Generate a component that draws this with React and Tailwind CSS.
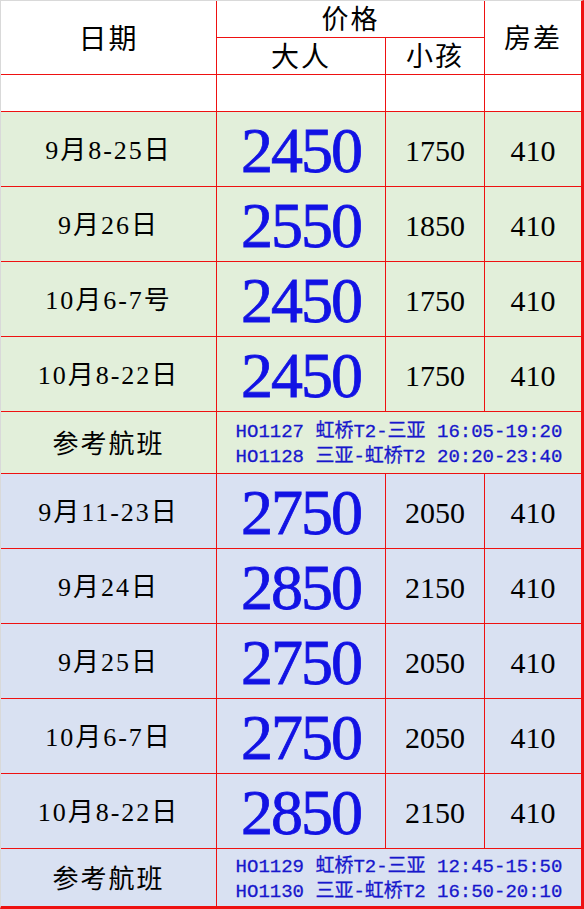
import React from "react";

const serif = { fontFamily: '"Liberation Serif", "Noto Sans CJK SC", serif' };
const mono = { fontFamily: '"Liberation Mono", "Noto Sans CJK SC", monospace' };

const green = [
  ["9月8-25日", "2450", "1750", "410"],
  ["9月26日", "2550", "1850", "410"],
  ["10月6-7号", "2450", "1750", "410"],
  ["10月8-22日", "2450", "1750", "410"],
];
const blue = [
  ["9月11-23日", "2750", "2050", "410"],
  ["9月24日", "2850", "2150", "410"],
  ["9月25日", "2750", "2050", "410"],
  ["10月6-7日", "2750", "2050", "410"],
  ["10月8-22日", "2850", "2150", "410"],
];

function Row({ r, bg }) {
  return (
    <>
      <div className={`${bg} flex items-center justify-center text-[26px] tracking-[2px] text-black pt-[3px]`}>{r[0]}</div>
      <div className={`${bg} flex items-center justify-center text-[64px] tracking-[-2px] text-[#1212e4] [-webkit-text-stroke:0.8px_#1212e4] pt-[4px]`}>{r[1]}</div>
      <div className={`${bg} flex items-center justify-center text-[30px] text-black pt-[2px]`}>{r[2]}</div>
      <div className={`${bg} flex items-center justify-center text-[30px] text-black pt-[2px]`}>{r[3]}</div>
    </>
  );
}

function Flight({ bg, lines }) {
  return (
    <>
      <div className={`${bg} flex items-center justify-center text-[26px] tracking-[2px] text-black pt-[3px]`}>参考航班</div>
      <div className={`${bg} col-span-3 flex flex-col items-center justify-center text-[19px] leading-[25px] text-[#1717cc] [-webkit-text-stroke:0.3px_#1717cc] pt-[5px]`} style={mono}>
        {lines.map((l) => (
          <div key={l} className="whitespace-pre">{l}</div>
        ))}
      </div>
    </>
  );
}

export default function App() {
  const g = "bg-[#e2efda]";
  const b = "bg-[#d9e1f2]";
  return (
    <div className="w-[584px] h-[909px] bg-white" style={serif}>
      <div className="grid grid-cols-[215px_168px_98px_96px] grid-rows-[36px_36px_36px_74px_74px_74px_74px_61px_74px_74px_74px_74px_74px_57px] gap-px bg-[#ee1111] border-l border-t border-l-[#d9d9d9] border-t-[#d9d9d9] border-r-[3px] border-b-[3px] border-r-[#ee1111] border-b-[#ee1111]">
        <div className="row-span-2 bg-white flex items-center justify-center text-[28px] tracking-[2px] pt-[4px]">日期</div>
        <div className="col-span-2 bg-white flex items-center justify-center text-[27px] tracking-[2px] pt-[3px]">价格</div>
        <div className="row-span-2 bg-white flex items-center justify-center text-[27px] tracking-[2px] pt-[4px]">房差</div>
        <div className="bg-white flex items-center justify-center text-[28px] tracking-[2px] pt-[3px]">大人</div>
        <div className="bg-white flex items-center justify-center text-[27px] tracking-[2px] pt-[3px]">小孩</div>
        <div className="bg-white" />
        <div className="bg-white" />
        <div className="bg-white" />
        <div className="bg-white" />
        {green.map((r) => (
          <Row key={r[0]} r={r} bg={g} />
        ))}
        <Flight
          bg={g}
          lines={["HO1127 虹桥T2-三亚 16:05-19:20", "HO1128 三亚-虹桥T2 20:20-23:40"]}
        />
        {blue.map((r) => (
          <Row key={r[0] + r[1]} r={r} bg={b} />
        ))}
        <Flight
          bg={b}
          lines={["HO1129 虹桥T2-三亚 12:45-15:50", "HO1130 三亚-虹桥T2 16:50-20:10"]}
        />
      </div>
    </div>
  );
}
